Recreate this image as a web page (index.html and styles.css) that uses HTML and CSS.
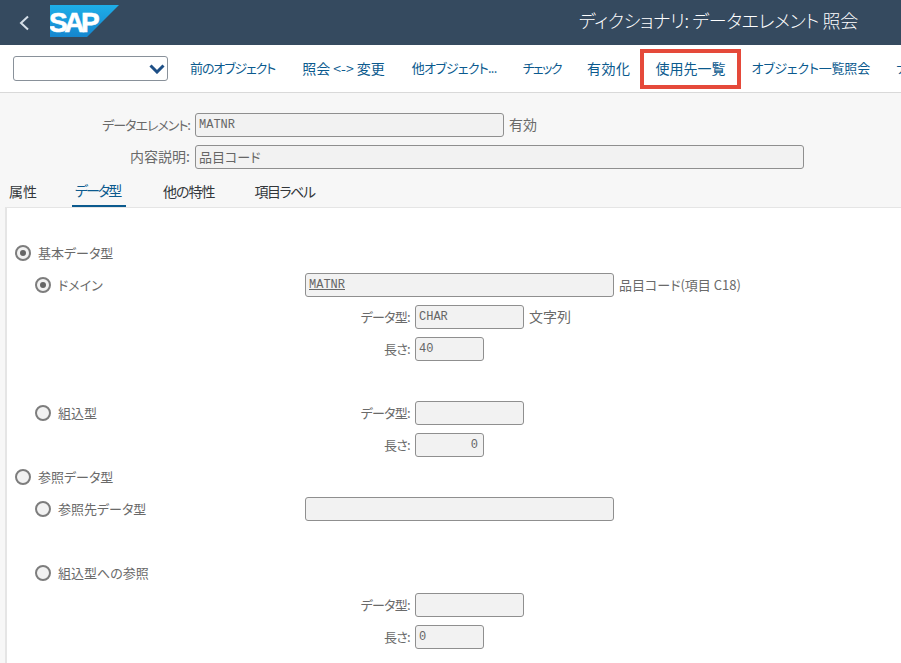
FILE: index.html
```html
<!DOCTYPE html>
<html lang="ja">
<head>
    <meta charset="UTF-8">
    <title>ディクショナリ: データエレメント 照会</title>
    <link rel="stylesheet" href="styles.css">
</head>
<body>
    <div class="header">
        <svg class="back-icon" width="12" height="16" viewBox="0 0 12 16">
            <path d="M10 1.5 L3 8 L10 14.5" fill="none" stroke="#d5dfe8" stroke-width="2"/>
        </svg>
        <svg class="logo" width="69" height="32" viewBox="0 0 69 32">
            <defs>
                <linearGradient id="sapBlue" x1="0" y1="0" x2="0" y2="1">
                    <stop offset="0" stop-color="#1eaee8"/>
                    <stop offset="1" stop-color="#1586cf"/>
                </linearGradient>
            </defs>
            <polygon points="0,0 69,0 37,32 0,32" fill="url(#sapBlue)"/>
            <text x="-1" y="27" class="logo-text">SAP</text>
        </svg>
        <span class="title">ディクショナリ: データエレメント 照会</span>
    </div>

    <div class="toolbar">
        <div class="select-box">
            <svg width="16" height="10" viewBox="0 0 16 10">
                <path d="M1.5 1.5 L8 8 L14.5 1.5" fill="none" stroke="#1d4f86" stroke-width="3"/>
            </svg>
        </div>
        <a class="tool-btn tool-kana tool-after-wide">前のオブジェクト</a>
        <a class="tool-btn tool-kanji tool-after-wide">照会 &lt;-&gt; 変更</a>
        <a class="tool-btn tool-kana-dots">他オブジェクト...</a>
        <a class="tool-btn tool-kana-short">チェック</a>
        <a class="tool-btn tool-kanji tool-wide-gap">有効化</a>
        <a class="tool-btn tool-kanji tool-btn-marked">使用先一覧</a>
        <a class="tool-btn tool-list">オブジェクト一覧照会</a>
        <a class="tool-btn">ナビゲーション</a>
    </div>

    <div class="object-head">
        <div class="head-row">
            <span class="head-label head-label-kana">データエレメント:</span>
            <span class="field field-name">MATNR</span>
            <span class="note note-kanji">有効</span>
        </div>
        <div class="head-row">
            <span class="head-label head-label-kanji">内容説明:</span>
            <span class="field field-desc cjk">品目コード</span>
        </div>
    </div>

    <div class="tabs">
        <span class="tab">属性</span>
        <span class="tab tab-active">データ型</span>
        <span class="tab tab-third">他の特性</span>
        <span class="tab tab-last">項目ラベル</span>
    </div>

    <div class="panel">
        <div class="row">
            <label class="choice"><span class="radio radio-on"></span>基本データ型</label>
        </div>
        <div class="row">
            <label class="choice choice-sub"><span class="radio radio-on"></span>ドメイン</label>
            <span class="field field-domain link">MATNR</span>
            <span class="note">品目コード(項目 C18)</span>
        </div>
        <div class="row">
            <span class="sub-label">データ型:</span>
            <span class="field field-type">CHAR</span>
            <span class="note note-kanji">文字列</span>
        </div>
        <div class="row">
            <span class="sub-label">長さ:</span>
            <span class="field field-len">40</span>
        </div>
        <div class="row"></div>
        <div class="row">
            <label class="choice choice-sub"><span class="radio"></span>組込型</label>
            <span class="sub-label sub-label-after">データ型:</span>
            <span class="field field-type"></span>
        </div>
        <div class="row">
            <span class="sub-label">長さ:</span>
            <span class="field field-len field-num">0</span>
        </div>
        <div class="row">
            <label class="choice"><span class="radio"></span>参照データ型</label>
        </div>
        <div class="row">
            <label class="choice choice-sub"><span class="radio"></span>参照先データ型</label>
            <span class="field field-domain"></span>
        </div>
        <div class="row"></div>
        <div class="row">
            <label class="choice choice-sub"><span class="radio"></span>組込型への参照</label>
        </div>
        <div class="row">
            <span class="sub-label">データ型:</span>
            <span class="field field-type"></span>
        </div>
        <div class="row">
            <span class="sub-label">長さ:</span>
            <span class="field field-len">0</span>
        </div>
    </div>
</body>
</html>
```

FILE: styles.css
```css
html, body {
    height: 100%;
}

body {
    margin: 0;
    overflow: hidden;
    background-color: #f7f7f7;
    color: #6a6a6a;
    font-family: "Noto Sans CJK JP", "Liberation Sans", sans-serif;
    font-size: 13px;
    font-feature-settings: "palt";
}

.header {
    height: 45px;
    background-color: #354a5f;
    display: flex;
    align-items: center;
    padding: 0 43px 0 18px;
    box-sizing: border-box;
}

.back-icon {
    margin-right: 20px;
}

.logo {
    margin-top: -3px;
}

.logo-text {
    font-family: "Liberation Sans", sans-serif;
    font-size: 28px;
    font-weight: bold;
    letter-spacing: -3.5px;
    fill: white;
    stroke: white;
    stroke-width: 0.6px;
}

.title {
    margin-left: auto;
    margin-bottom: 5px;
    color: white;
    font-size: 18px;
    font-weight: 300;
    letter-spacing: -0.3px;
    white-space: nowrap;
}

.toolbar {
    height: 48px;
    background-color: white;
    border-bottom: 1px solid #d9d9d9;
    box-sizing: border-box;
    display: flex;
    align-items: center;
    padding-left: 13px;
    overflow: hidden;
}

.select-box {
    width: 155px;
    height: 25px;
    flex: none;
    box-sizing: border-box;
    border: 1px solid #89919a;
    border-radius: 3px;
    display: flex;
    align-items: center;
    justify-content: flex-end;
    padding-right: 2px;
    margin-right: 9px;
}

.tool-btn {
    flex: none;
    color: #0b5a8e;
    font-size: 13px;
    white-space: nowrap;
    padding: 0 13px 2px;
}

.tool-kana {
    letter-spacing: -1.1px;
}

.tool-after-wide {
    margin-right: 1px;
}

.tool-kana-dots {
    letter-spacing: -0.75px;
}

.tool-kana-short {
    letter-spacing: -1.5px;
}

.tool-kanji {
    font-size: 14px;
}

.tool-wide-gap {
    letter-spacing: 0.5px;
}

.tool-list {
    letter-spacing: -0.2px;
}

.tool-btn-marked {
    height: 40px;
    box-sizing: border-box;
    border: 4px solid #e5493a;
    display: flex;
    align-items: center;
    padding: 0 11px 2px 12px;
    margin: 0 -2px 0 -4px;
}

.object-head {
    padding-top: 16px;
}

.head-row {
    height: 32px;
    display: flex;
    align-items: center;
}

.head-label {
    width: 190px;
    text-align: right;
    margin-right: 5px;
    padding-bottom: 2px;
    flex: none;
    box-sizing: border-box;
}

.head-label-kana {
    letter-spacing: -1px;
}

.head-label-kanji {
    font-size: 14px;
}

.field {
    height: 24px;
    flex: none;
    box-sizing: border-box;
    background-color: #f2f2f2;
    border: 1px solid #8f8f8f;
    border-radius: 3px;
    padding: 0 3px;
    font-family: "Liberation Mono", "Noto Sans CJK JP", monospace;
    font-size: 12px;
    line-height: 22px;
    color: #666;
}

.cjk {
    font-family: "Noto Sans CJK JP", sans-serif;
    font-size: 13px;
}

.field-name {
    width: 309px;
}

.field-desc {
    width: 609px;
}

.field-domain {
    width: 309px;
}

.field-type {
    width: 109px;
}

.field-len {
    width: 69px;
}

.field-num {
    text-align: right;
    padding-right: 5px;
}

.link {
    text-decoration: underline;
}

.note {
    margin-left: 5px;
    padding-bottom: 2px;
    white-space: nowrap;
}

.note-kanji {
    font-size: 14px;
}

.tabs {
    height: 35px;
    display: flex;
    padding: 0 0 0 9px;
    margin-top: -1px;
    box-sizing: border-box;
    align-items: stretch;
}

.tab {
    color: #32363a;
    font-size: 14px;
    display: flex;
    align-items: center;
    box-sizing: border-box;
    padding: 2px 35px 0 0;
}

.tab-active {
    color: #0b5a8e;
    letter-spacing: -2px;
    width: 54px;
    padding: 2px 0 0 3px;
    margin-right: 37px;
    border-bottom: 2px solid #0b5a8e;
}

.tab-third {
    letter-spacing: -1px;
    padding-right: 40px;
}

.tab-last {
    letter-spacing: -1.5px;
}

.panel {
    height: 456px;
    margin-left: 5px;
    padding-top: 29px;
    box-sizing: border-box;
    background-color: white;
    border-left: 2px solid #e5e5e5;
    border-top: 1px solid #e5e5e5;
}

.row {
    height: 32px;
    display: flex;
    align-items: center;
}

.choice {
    width: 298px;
    flex: none;
    box-sizing: border-box;
    padding: 0 0 2px 8px;
    display: flex;
    align-items: center;
    white-space: nowrap;
}

.choice-sub {
    padding-left: 28px;
}

.radio {
    width: 16px;
    height: 16px;
    margin: 2px 7px 0 0;
    flex: none;
    box-sizing: border-box;
    border: 2px solid #7d7d7d;
    border-radius: 50%;
    background-color: #f2f2f2;
    display: flex;
    align-items: center;
    justify-content: center;
}

.radio-on::after {
    content: "";
    width: 6px;
    height: 6px;
    border-radius: 50%;
    background-color: #666;
}

.sub-label {
    width: 403px;
    margin-right: 5px;
    padding-bottom: 2px;
    flex: none;
    text-align: right;
    letter-spacing: -0.7px;
    box-sizing: border-box;
}

.sub-label-after {
    width: 105px;
}
```
